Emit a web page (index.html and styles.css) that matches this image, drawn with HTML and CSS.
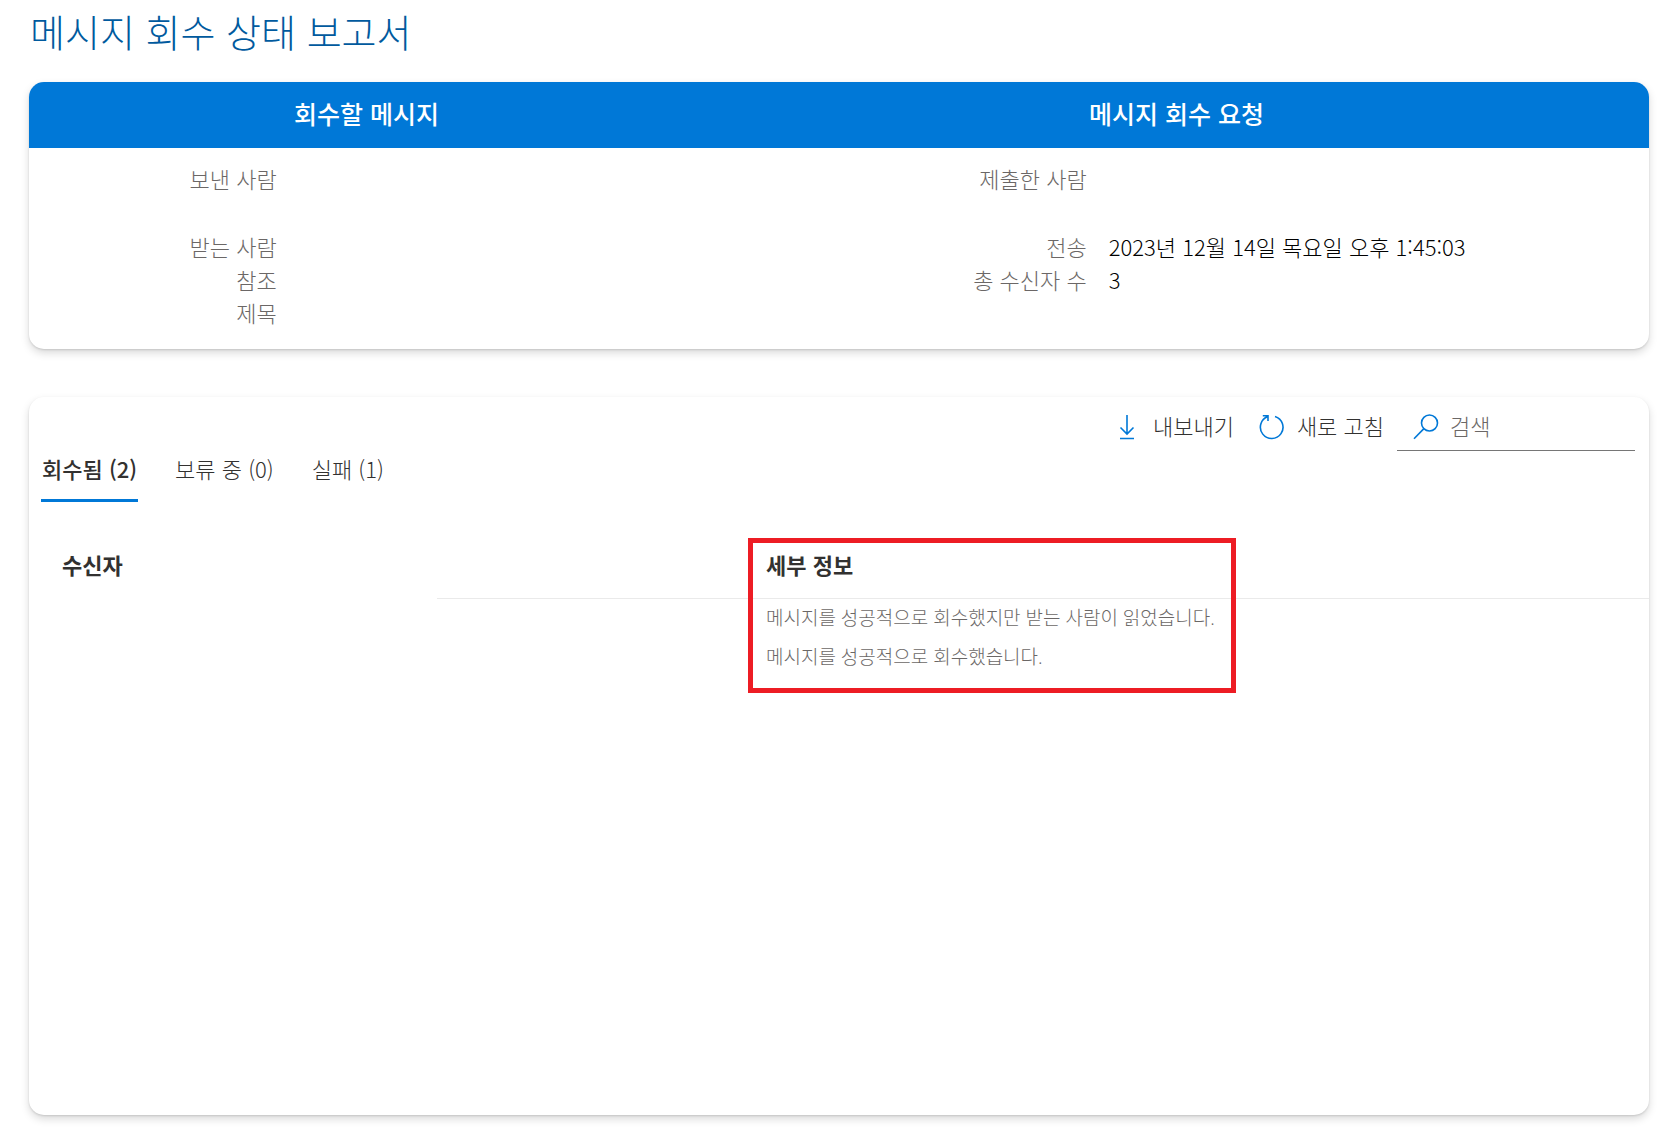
FILE: index.html
```
<!DOCTYPE html>
<html lang="ko">
<head>
    <meta charset="UTF-8">
    <meta name="viewport" content="width=device-width, initial-scale=1.0">
    <title>메시지 회수 상태 보고서</title>
    <link rel="stylesheet" href="styles.css">
</head>
<body>
    <h1 class="page-title">메시지 회수 상태 보고서</h1>

    <section class="card summary">
        <div class="summary-col">
            <h2>회수할 메시지</h2>
            <dl class="fields original">
                <dt class="tall">보낸 사람</dt><dd></dd>
                <dt>받는 사람</dt><dd></dd>
                <dt>참조</dt><dd></dd>
                <dt>제목</dt><dd></dd>
            </dl>
        </div>
        <div class="summary-col">
            <h2>메시지 회수 요청</h2>
            <dl class="fields request">
                <dt class="tall">제출한 사람</dt><dd></dd>
                <dt>전송</dt><dd>2023년 12월 14일 목요일 오후 1:45:03</dd>
                <dt>총 수신자 수</dt><dd>3</dd>
            </dl>
        </div>
    </section>

    <main class="card results">
        <div class="toolbar">
            <button type="button" class="tool">
                <svg class="icon-export" width="16" height="26" viewBox="0 0 16 26" aria-hidden="true">
                    <path d="M8 1v19M1.500 13.500L8 20l6.500-6.500M1 24.500h14"/>
                </svg>
                <span>내보내기</span>
            </button>
            <button type="button" class="tool">
                <svg class="icon-refresh" width="26" height="26" viewBox="0 0 26 26" aria-hidden="true">
                    <path d="M16 2.400A11.300 11.300 0 1 1 8.800 2.600M3.800 1.700h5.200v5.400"/>
                </svg>
                <span>새로 고침</span>
            </button>
            <label class="search">
                <svg width="26" height="26" viewBox="0 0 26 26" aria-hidden="true">
                    <circle cx="16.500" cy="9" r="8"/>
                    <path d="M10.900 14.600L1 24.800"/>
                </svg>
                <input type="text" placeholder="검색" aria-label="검색">
            </label>
        </div>

        <div class="tabs" role="tablist">
            <button type="button" class="tab active" role="tab" aria-selected="true">회수됨 (2)</button>
            <button type="button" class="tab" role="tab" aria-selected="false">보류 중 (0)</button>
            <button type="button" class="tab" role="tab" aria-selected="false">실패 (1)</button>
        </div>

        <table class="recipients">
            <thead>
                <tr>
                    <th class="name">수신자</th>
                    <th class="gap"></th>
                    <th class="detail">세부 정보<span class="highlight"></span></th>
                </tr>
            </thead>
            <tbody>
                <tr>
                    <td></td>
                    <td></td>
                    <td>메시지를 성공적으로 회수했지만 받는 사람이 읽었습니다.</td>
                </tr>
                <tr>
                    <td></td>
                    <td></td>
                    <td>메시지를 성공적으로 회수했습니다.</td>
                </tr>
            </tbody>
        </table>
    </main>
</body>
</html>
```
FILE: styles.css
```
* {
    margin: 0;
    padding: 0;
    box-sizing: border-box;
}

body {
    display: flex;
    flex-direction: column;
    min-height: 100vh;
    padding: 0 20px 22px 29px;
    background-color: #fff;
    color: #323130;
    font-family: "Noto Sans CJK KR", sans-serif;
    font-size: 22px;
    font-weight: 300;
    line-height: 34px;
}

button, input {
    border: none;
    background: none;
    color: inherit;
    font: inherit;
}

svg {
    flex: none;
    fill: none;
    stroke: #0078d7;
    stroke-width: 1.6;
}

.page-title {
    padding: 5px 1px 25px;
    color: #005a9e;
    font-size: 38px;
    font-weight: 300;
    line-height: 52px;
}

.card {
    border-radius: 15px;
    box-shadow: 0 4px 9px rgba(0, 0, 0, 0.15), 0 1px 2px rgba(0, 0, 0, 0.12);
}

/* summary */
.summary {
    display: grid;
    grid-template-columns: 5fr 7fr;
    margin-bottom: 48px;
    overflow: hidden;
}

.summary h2 {
    padding: 14px 0 18px;
    background-color: #0078d7;
    color: #fff;
    font-size: 25px;
    font-weight: 500;
    text-align: center;
}

.fields {
    display: grid;
    column-gap: 22px;
    padding: 14px 0 20px;
    line-height: 33px;
}

.original {
    grid-template-columns: 36.7% 1fr;
}

.request {
    grid-template-columns: 40.5% 1fr;
}

.fields dt {
    color: #6b6766;
    text-align: right;
}

.fields .tall {
    height: 68px;
}

.fields dd {
    color: #000;
}

/* results */
.results {
    flex: 1;
}

.toolbar {
    display: flex;
    justify-content: flex-end;
    padding: 6px 14px 0;
}

.tool {
    display: flex;
    align-items: center;
    height: 48px;
    cursor: pointer;
}

.tool span {
    padding-bottom: 4px;
}

.icon-export {
    margin-right: 18px;
}

.icon-refresh {
    margin: 0 12px 0 25px;
}

.search {
    display: flex;
    align-items: center;
    width: 238px;
    height: 48px;
    margin-left: 13px;
    padding-left: 16px;
    border-bottom: 1px solid #767676;
}

.search input {
    width: 100%;
    padding: 0 0 4px 11px;
    outline: none;
}

.search input::placeholder {
    color: #6b6766;
}

.tabs {
    display: flex;
    gap: 36px;
    padding: 0 12px 36px;
}

.tab {
    padding: 0 1px 14px;
    border-bottom: 3px solid transparent;
    cursor: pointer;
}

.tab.active {
    border-color: #0078d7;
    font-weight: 500;
}

.recipients {
    width: 100%;
    border-collapse: separate;
    border-spacing: 0;
    table-layout: fixed;
    text-align: left;
}

.recipients th {
    height: 61px;
    padding-bottom: 8px;
    border-bottom: 1px solid #eaeaea;
    font-weight: 700;
}

.recipients .name {
    width: 408px;
    padding-left: 33px;
    border-bottom-color: transparent;
}

.recipients .gap {
    width: 311px;
}

.recipients .detail {
    position: relative;
    padding-left: 18px;
}

.recipients td {
    height: 39px;
    padding: 0 0 2px 18px;
    color: #6b6766;
    font-family: "Open Sans", "Noto Sans CJK KR", sans-serif;
    font-size: 19px;
}

/* red frame around the detail column */
.highlight {
    position: absolute;
    top: 0;
    left: 0;
    width: 488px;
    height: 155px;
    border: 5px solid #ed1c24;
}
```
